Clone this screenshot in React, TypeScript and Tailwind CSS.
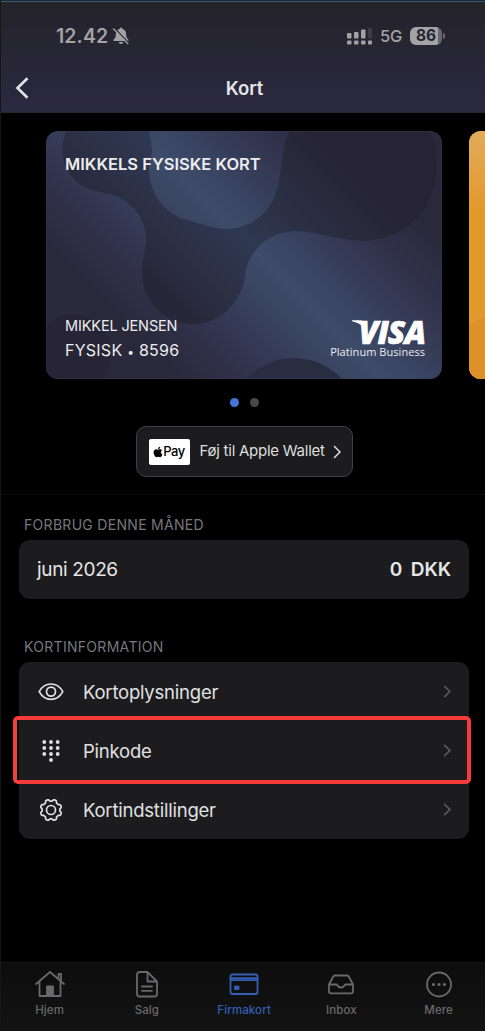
import type { ReactNode } from 'react'
import { FaApple } from 'react-icons/fa'

const iconProps = {
  fill: 'none',
  stroke: 'currentColor',
  strokeLinecap: 'round' as const,
  strokeLinejoin: 'round' as const,
}

// Eight rounded teeth, with a notch at the top
const gearPath =
  Array.from({ length: 144 }, (_, i) => {
    const a = (i / 144) * Math.PI * 2
    const r = 9.8 + 0.95 * Math.tanh(-2.2 * Math.cos(8 * a))
    return `${i ? 'L' : 'M'}${(13 + r * Math.cos(a)).toFixed(2)} ${(13 + r * Math.sin(a)).toFixed(2)}`
  }).join('') + 'Z'

function Chevron({ className }: { className: string }) {
  return (
    <svg viewBox="0 0 8 14" className={className} {...iconProps} strokeLinecap="butt" strokeLinejoin="miter">
      <path d="M1 1l6 6-6 6" />
    </svg>
  )
}

function StatusBar() {
  return (
    <div className="flex h-[68px] items-center justify-between pl-[55px] pr-[40px] text-[#a3a2a5]">
      <div className="flex items-center gap-[4px]">
        <span className="text-[19.5px] font-semibold leading-6 tracking-[0.1px]">12.42</span>
        <svg viewBox="0 0 18 18" className="h-[18px] w-[18px]">
          <path
            d="M9 .8c-.9 0-1.4.5-1.5 1.2C5 2.8 3.8 4.8 3.8 7.4c0 3-1 4.2-2.1 5.100-.7.7-.4 1.500.5 1.500h13.600c.9 0 1.200-.8.5-1.500-1.100-.9-2.100-2.100-2.100-5.100 0-2.600-1.200-4.600-3.700-5.400C10.400 1.300 9.900.8 9 .8zM6.800 14.900c.2 1.300 1.100 2 2.200 2s2-.7 2.200-2z"
            fill="currentColor"
          />
          <path d="M2.200 1.100l15 15.400" stroke="#26252e" strokeWidth="1.500" />
          <path d="M1.200 1.500l15 15.400" stroke="currentColor" strokeWidth="1.400" />
        </svg>
      </div>
      <div className="flex items-center">
        <svg viewBox="0 0 26 18" className="h-[18px] w-[26px]" fill="currentColor">
          <rect x="0" y="6" width="4.500" height="5.500" rx="1" />
          <rect x="7" y="5" width="4.500" height="6.500" rx="1" />
          <rect x="14" y="2.500" width="4.500" height="9" rx="1" />
          <rect x="21" y="1" width="4" height="10.500" rx="1" opacity=".2" />
          <rect x="0" y="13.500" width="4.500" height="4" rx="1" />
          <rect x="7" y="13.500" width="4.500" height="4" rx="1" />
          <rect x="14" y="13.500" width="4.500" height="4" rx="1" />
          <rect x="21" y="13.500" width="4" height="4" rx="1" />
        </svg>
        <span className="ml-[7px] text-[16.5px] font-medium leading-5 tracking-[-0.3px]">5G</span>
        <div className="ml-[8px] flex h-[18px] w-[32px] items-center justify-center rounded-[6px] bg-linear-to-r from-[#a3a2a5] from-86% to-[#68676d] to-86% text-[15.5px] font-bold leading-none text-[#26252e]">
          86
        </div>
        <div className="ml-[1px] h-[6px] w-[2px] rounded-r-full bg-[#68676d]" />
      </div>
    </div>
  )
}

function PaymentCard() {
  return (
    <div className="relative h-[248px] w-[396px] shrink-0 overflow-hidden rounded-[12px]">
      <svg viewBox="0 0 396 248" className="absolute inset-0 h-full w-full">
        <defs>
          <linearGradient id="base" gradientUnits="userSpaceOnUse" x1="0" y1="247" x2="321.5" y2="-74.5">
            <stop offset="0.2" stopColor="#29293b" />
            <stop offset="0.3" stopColor="#303049" />
            <stop offset="0.38" stopColor="#343a56" />
            <stop offset="0.45" stopColor="#39445f" />
            <stop offset="0.52" stopColor="#3e4c69" />
            <stop offset="0.6" stopColor="#384360" />
            <stop offset="0.71" stopColor="#32334d" />
            <stop offset="0.82" stopColor="#2a293c" />
          </linearGradient>
          <linearGradient id="blob" gradientUnits="userSpaceOnUse" x1="0" y1="247" x2="321.5" y2="-74.5">
            <stop offset="0.32" stopColor="#282739" />
            <stop offset="0.415" stopColor="#2b3045" />
            <stop offset="0.53" stopColor="#2f3852" />
            <stop offset="0.63" stopColor="#2b3044" />
            <stop offset="0.79" stopColor="#262434" />
          </linearGradient>
        </defs>
        <rect width="396" height="248" fill="url(#base)" />
        <path
          d="M20 0C10 26 21 55 54 61C84 65 101 87 100 109C99 122 96 130 96 144C97 172 119 193 146 193C173 193 194 174 199 147C200 122 221 100 251 100C274 101 293 110 318 110C360 109 391 76 391 36C391 22 388 9 384 0H244C233 20 238 47 227 69C217 88 200 98 179 98C164 97 151 91 137 88C115 79 103 60 103 38C103 29 106 27 106 19Q106 9 103 0Z"
          fill="url(#blob)"
        />
        <circle cx="26" cy="223" r="39" fill="#272435" />
        <circle cx="248" cy="292" r="65" fill="#292d42" />
        <rect x=".5" y=".5" width="395" height="247" rx="11.500" fill="none" stroke="#3b3d55" strokeOpacity=".4" />
      </svg>
      <div className="relative flex h-full flex-col justify-between pb-[15px] pl-[19px] pr-[17px] pt-[22px] text-[#ececef]">
        <h2 className="text-[16.5px] font-semibold leading-[22px]">MIKKELS FYSISKE KORT</h2>
        <div className="flex items-end justify-between">
          <div>
            <p className="text-[14.5px] leading-6 tracking-[-0.15px]">MIKKEL JENSEN</p>
            <p className="text-[16px] leading-6 tracking-[0.25px]">
              FYSISK <span className="inline-block w-[7px] text-center text-[12px]">•</span> 8596
            </p>
          </div>
          <div className="flex flex-col items-end pb-[5px] font-['Open_Sans',sans-serif]">
            <div className="flex">
              {/* serif that runs out of the V */}
              <svg viewBox="0 0 12 8" className="mt-[3px] -mr-[5px] h-[8px] w-[12px]" fill="white">
                <path d="M0 .3h9.500l2 7.200Q7.500 2.600 0 1.300z" />
              </svg>
              <span className="h-[26px] text-[32px] font-extrabold italic leading-[29px] tracking-[-1px] text-white [-webkit-text-stroke:0.6px_white]">
                VISA
              </span>
            </div>
            <span className="mt-[2px] text-[11px] font-medium leading-[14px] tracking-[0.05px]">Platinum Business</span>
          </div>
        </div>
      </div>
    </div>
  )
}

function WalletButton() {
  return (
    <button className="flex h-[51px] w-[217px] items-center rounded-[10px] border border-[#414144] bg-[#1c1c1e] pl-[12px]">
      <span className="flex h-[26px] w-[41px] items-center justify-center rounded-[2px] bg-white text-black">
        <FaApple className="h-[12px] w-[10px]" />
        <span className="text-[13px] font-medium leading-none tracking-[-0.4px]">Pay</span>
      </span>
      <span className="ml-[10px] whitespace-nowrap text-[15px] tracking-[-0.25px] text-[#dededf]">Føj til Apple Wallet</span>
      <Chevron className="ml-[8px] h-[14px] w-[8px] stroke-[1.5] text-[#dededf]" />
    </button>
  )
}

function SectionLabel({ children }: { children: ReactNode }) {
  return <h3 className="pl-[5px] text-[14px] leading-4 tracking-[0.3px] text-[#77777c]">{children}</h3>
}

const rows = [
  {
    label: 'Kortoplysninger',
    icon: (
      <svg viewBox="0 0 26 26" className="h-[26px] w-[26px]" {...iconProps} strokeWidth="1.700">
        <path d="M1.200 12.600C4 7.500 8 5 13 5s9 2.500 11.800 7.600C22 17.800 18 20.300 13 20.300S4 17.800 1.200 12.600z" />
        <circle cx="13" cy="12.600" r="4.500" />
      </svg>
    ),
  },
  {
    label: 'Pinkode',
    icon: (
      <svg viewBox="0 0 26 26" className="h-[26px] w-[26px]" fill="currentColor">
        {[4, 10, 16].map((y) => [6.3, 13, 19.7].map((x) => <circle key={`${x}-${y}`} cx={x} cy={y} r="1.900" />))}
        <circle cx="13" cy="22" r="1.900" />
      </svg>
    ),
  },
  {
    label: 'Kortindstillinger',
    icon: (
      <svg viewBox="0 0 26 26" className="h-[26px] w-[26px]" {...iconProps} strokeWidth="1.700">
        <path d={gearPath} />
        <circle cx="13" cy="13" r="4.500" />
      </svg>
    ),
  },
]

const tabs = [
  {
    label: 'Hjem',
    icon: (
      <>
        <path d="M1 14L15 2l14 12M4.500 11.500V26h21V11.500M23.500 9V4h2.500v7" />
        <path d="M12 16.500h6V26h-6z" fill="currentColor" />
      </>
    ),
  },
  {
    label: 'Salg',
    icon: <path d="M15.500 2H7.500A2.500 2.500 0 0 0 5 4.500V24a2.500 2.500 0 0 0 2.500 2.500h15A2.500 2.500 0 0 0 25 24V11.500L15.500 2v9.500H25M10 16.500h10M10 20.800h10" />,
  },
  {
    label: 'Firmakort',
    active: true,
    icon: (
      <>
        <rect x="1.500" y="4.500" width="27" height="19.500" rx="2" />
        <path d="M1.500 8.200h27M1.500 10.200h27" />
        <rect x="6" y="16.500" width="3.500" height="2.500" fill="currentColor" />
      </>
    ),
  },
  {
    label: 'Inbox',
    icon: <path d="M3 14.500L7 7q.7-1.500 2-1.500h12q1.300 0 2 1.500l4 7.500v7A1.800 1.800 0 0 1 25.200 23.300H4.800A1.800 1.800 0 0 1 3 21.500zM3 14.500h7.500c1 0 .7 3 4.500 3s3.500-3 4.500-3H27" />,
  },
  {
    label: 'Mere',
    icon: (
      <>
        <circle cx="15" cy="14.500" r="12" />
        <path d="M9.500 14.500h.01M15 14.500h.01M20.500 14.500h.01" strokeWidth="3.200" />
      </>
    ),
  },
]

export default function App() {
  return (
    <div className="flex h-[1031px] w-[485px] flex-col overflow-hidden border-l border-[#161617] bg-black font-['Inter',sans-serif]">
      <div className="h-[2px] shrink-0 border-b border-[#4c555e] bg-[#0b2c47]" />
      <header className="h-[111px] shrink-0 border-b border-[#28272e] bg-linear-to-b from-[#242329] to-[#2b2841]">
        <StatusBar />
        <div className="flex h-[36px] items-center pl-[14px] text-[#e4e4e8]">
          <svg viewBox="0 0 14 22" className="h-[22px] w-[14px]" {...iconProps} strokeWidth="2.600" strokeLinecap="butt" strokeLinejoin="miter">
            <path d="M12.500 1.300L2.500 11l10 9.700" />
          </svg>
          <h1 className="flex-1 pr-[25px] pt-[2px] text-center text-[18.5px] font-semibold">Kort</h1>
        </div>
      </header>

      <div className="mt-[18px] flex shrink-0 gap-[27px] pl-[45px]">
        <PaymentCard />
        <div className="h-[248px] w-[396px] shrink-0 overflow-hidden rounded-[12px] bg-[#e2992c]">
          <svg viewBox="0 0 396 248" className="h-full w-full">
            <defs>
              <linearGradient id="gold" gradientUnits="userSpaceOnUse" x1="0" y1="0" x2="12" y2="75">
                <stop stopColor="#e2ac5c" />
                <stop offset="1" stopColor="#e2992c" />
              </linearGradient>
            </defs>
            <rect width="396" height="248" fill="url(#gold)" />
            <path d="M0 195Q10 186 30 182V248H0z" fill="#de9129" />
          </svg>
        </div>
      </div>

      <div className="flex h-[47px] shrink-0 items-center justify-center gap-[11px] pl-[2px]">
        <span className="h-[9px] w-[9px] rounded-full bg-[#4675d9]" />
        <span className="h-[9px] w-[9px] rounded-full bg-[#48484a]" />
      </div>

      <div className="flex shrink-0 justify-center border-b border-[#0d0d0e] pb-[17px] pl-[2px]">
        <WalletButton />
      </div>

      <main className="flex-1 pl-[18px] pr-[16px] pt-[22px]">
        <SectionLabel>FORBRUG DENNE MÅNED</SectionLabel>
        <div className="mt-[7px] flex h-[59px] items-center justify-between rounded-[11px] bg-[#1c1c1e] px-[18px] pt-[1px] text-[19px] text-[#e6e6e8]">
          <span className="tracking-[-0.35px]">juni 2026</span>
          <span className="font-semibold tracking-[-0.1px] [word-spacing:4px]">0 DKK</span>
        </div>

        <div className="mt-[40px]">
          <SectionLabel>KORTINFORMATION</SectionLabel>
        </div>
        <div className="relative mt-[7px] rounded-[11px] bg-[#1c1c1e]">
          {rows.map((row) => (
            <div key={row.label} className="flex h-[59px] items-center pl-[19px] pr-[18px] text-[#e0e0e2]">
              {row.icon}
              <span className="ml-[19px] flex-1 pt-[2px] text-[18.5px] tracking-[-0.22px]">{row.label}</span>
              <Chevron className="h-[13px] w-[8px] stroke-[1.7] text-[#5b5b5f]" />
            </div>
          ))}
          {/* highlight around the PIN row */}
          <div className="absolute -left-[6px] -right-[2px] top-[54px] h-[68px] rounded-[5px] border-4 border-[#f53b3b]" />
        </div>
      </main>

      <nav className="flex h-[69px] shrink-0 border-t border-[#151516] bg-linear-to-b from-[#0d0d0e] to-[#131314]">
        {tabs.map((tab) => (
          <div
            key={tab.label}
            className={`flex w-[97.25px] shrink-0 flex-col items-center pt-[7px] ${tab.active ? 'text-[#355fb5]' : 'text-[#69696b]'}`}
          >
            <svg viewBox="0 0 30 29" className="h-[29px] w-[30px]" {...iconProps} strokeWidth="1.800">
              {tab.icon}
            </svg>
            <span className="mt-[3px] text-[11.5px] font-medium leading-4 tracking-[0.1px]">{tab.label}</span>
          </div>
        ))}
      </nav>
    </div>
  )
}
